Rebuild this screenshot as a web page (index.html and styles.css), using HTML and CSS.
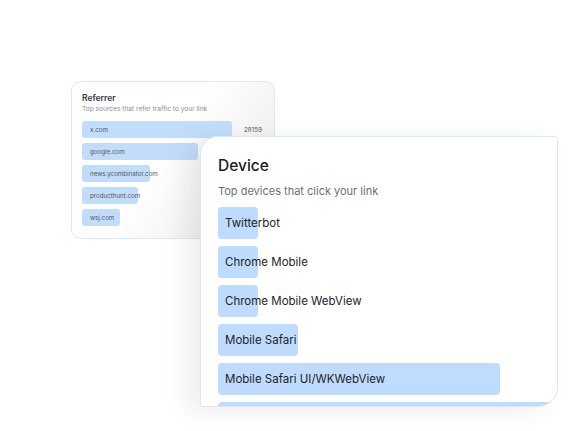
FILE: index.html
```html
<!DOCTYPE html>
<html>
<head>
<meta charset="utf-8">
<link rel="stylesheet" href="styles.css">
</head>
<body>
<div class="canvas">
  <section class="card referrer">
    <h2 class="ref-title">Referrer</h2>
    <p class="ref-sub">Top sources that refer traffic to your link</p>
    <ul class="ref-list">
      <li class="ref-row"><div class="ref-track"><span class="ref-bar" style="width:100%"></span><span class="ref-label">x.com</span></div><span class="ref-num">28159</span></li>
      <li class="ref-row"><div class="ref-track"><span class="ref-bar" style="width:77%"></span><span class="ref-label">google.com</span></div><span class="ref-num"></span></li>
      <li class="ref-row"><div class="ref-track"><span class="ref-bar" style="width:45%"></span><span class="ref-label">news.ycombinator.com</span></div><span class="ref-num"></span></li>
      <li class="ref-row"><div class="ref-track"><span class="ref-bar" style="width:37%"></span><span class="ref-label">producthunt.com</span></div><span class="ref-num"></span></li>
      <li class="ref-row"><div class="ref-track"><span class="ref-bar" style="width:25%"></span><span class="ref-label">wsj.com</span></div><span class="ref-num"></span></li>
    </ul>
  </section>

  <section class="card device">
    <h2 class="dev-title">Device</h2>
    <p class="dev-sub">Top devices that click your link</p>
    <ul class="dev-list">
      <li class="dev-row"><span class="dev-bar" style="width:40px"></span><span class="dev-label">Twitterbot</span></li>
      <li class="dev-row"><span class="dev-bar" style="width:40px"></span><span class="dev-label">Chrome Mobile</span></li>
      <li class="dev-row"><span class="dev-bar" style="width:40px"></span><span class="dev-label">Chrome Mobile WebView</span></li>
      <li class="dev-row"><span class="dev-bar" style="width:80px"></span><span class="dev-label">Mobile Safari</span></li>
      <li class="dev-row"><span class="dev-bar" style="width:282px"></span><span class="dev-label">Mobile Safari UI/WKWebView</span></li>
      <li class="dev-row"><span class="dev-bar" style="width:340px"></span></li>
    </ul>
  </section>
</div>
</body>
</html>
```

FILE: styles.css
```css
* { box-sizing: border-box; }
html, body { margin: 0; padding: 0; background: #ffffff; }
body { font-family: Inter, "Noto Sans", sans-serif; }

.canvas {
  position: relative;
  width: 578px;
  height: 431px;
  overflow: hidden;
  background: #ffffff;
}

.card { position: absolute; margin: 0; }

ul { list-style: none; margin: 0; padding: 0; }
h2, p { margin: 0; }

/* Referrer card */
.referrer {
  left: 71px;
  top: 81px;
  width: 204px;
  height: 158px;
  border: 1px solid #d7e8fb;
  border-radius: 10px;
  padding: 10px 10px 0 10px;
  background: linear-gradient(125deg, #ffffff 45%, #f2f2f2 75%, #e8e8e8 100%);
}
.ref-title {
  font-size: 8.5px;
  line-height: 12px;
  font-weight: 600;
  color: #36393d;
}
.ref-sub {
  margin-top: 1px;
  font-size: 6.6px;
  line-height: 9px;
  color: #8a8f96;
}
.ref-list {
  margin-top: 7px;
  display: flex;
  flex-direction: column;
  gap: 5px;
}
.ref-row {
  display: flex;
  align-items: center;
  gap: 12px;
}
.ref-track {
  position: relative;
  width: 150px;
  height: 17px;
  display: flex;
  align-items: center;
}
.ref-bar {
  position: absolute;
  left: 0; top: 0; bottom: 0;
  background: #c2dcfb;
  border-radius: 3px;
}
.ref-label {
  position: relative;
  padding-left: 8px;
  font-size: 6.2px;
  color: #50555c;
  white-space: nowrap;
}
.ref-num {
  font-size: 6.3px;
  color: #50555c;
}

/* Device card */
.device {
  left: 200px;
  top: 136px;
  width: 358px;
  height: 271px;
  overflow: hidden;
  background: #ffffff;
  border: 1px solid #d9ebfb;
  border-top-color: #d3f0fa;
  border-right-color: #e6e6e6;
  border-bottom-color: #e6e6e6;
  border-radius: 18px 4px 20px 2px;
  padding: 19px 18px 0 17px;
  box-shadow: -14px 4px 26px rgba(0, 0, 0, 0.07);
}
.dev-title {
  font-size: 15.5px;
  line-height: 20px;
  font-weight: 500;
  color: #1a1b1d;
}
.dev-sub {
  margin-top: 7px;
  font-size: 11px;
  line-height: 16px;
  color: #6b7078;
}
.dev-list {
  margin-top: 8px;
  display: flex;
  flex-direction: column;
  gap: 7px;
}
.dev-row {
  position: relative;
  height: 32px;
  display: flex;
  align-items: center;
}
.dev-bar {
  position: absolute;
  left: 0; top: 0; bottom: 0;
  background: #bfdbfd;
  border-radius: 4px;
}
.dev-label {
  position: relative;
  padding-left: 7px;
  font-size: 11.5px;
  color: #222428;
  white-space: nowrap;
}
```
